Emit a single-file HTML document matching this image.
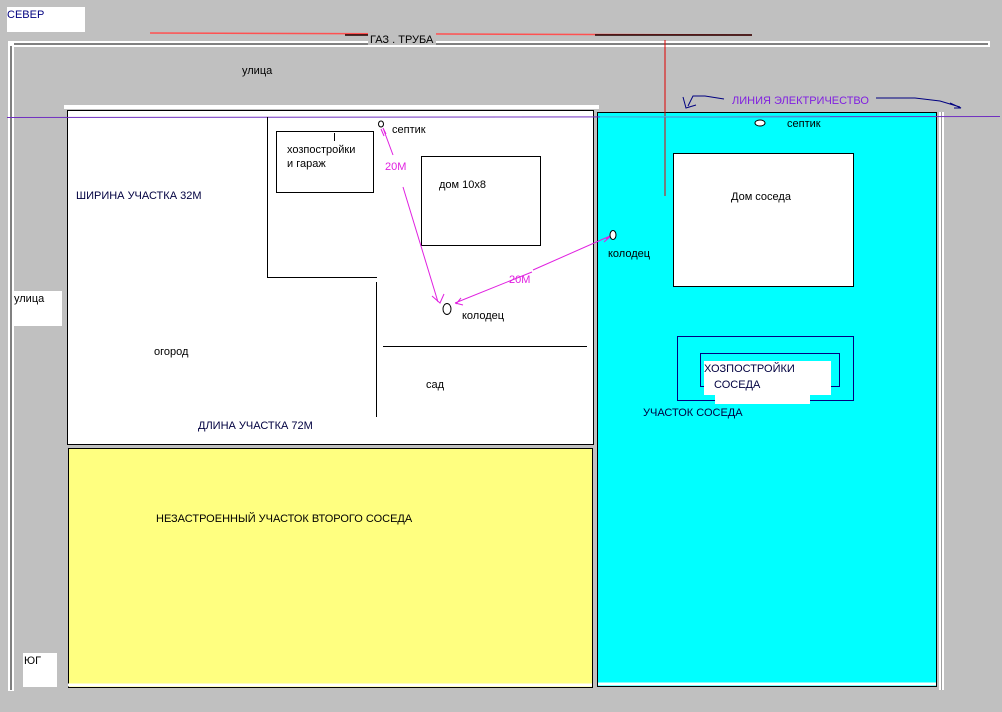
<!DOCTYPE html>
<html><head><meta charset="utf-8"><style>
html,body{margin:0;padding:0;background:#c0c0c0;}
svg{display:block}
text{font-family:"Liberation Sans",sans-serif;font-size:11px;}
</style></head><body>
<svg width="1002" height="712" viewBox="0 0 1002 712" xmlns="http://www.w3.org/2000/svg">
<rect width="1002" height="712" fill="#c0c0c0"/>
<rect x="7" y="7" width="78" height="25" fill="#fff"/>
<text x="7" y="18" fill="#000080">СЕВЕР</text>
<line x1="150" y1="33" x2="752" y2="35" stroke="#ff5050" stroke-width="1.5"/>
<line x1="595" y1="35" x2="752" y2="35" stroke="#200000" stroke-width="1.5"/>
<line x1="345" y1="35" x2="370" y2="35" stroke="#200000" stroke-width="1.5"/>
<rect x="8" y="41" width="982" height="6" fill="#fff"/>
<line x1="10" y1="44" x2="988" y2="44" stroke="#000" stroke-width="1"/>
<rect x="368" y="33" width="68" height="12" fill="#c0c0c0"/>
<text x="370" y="43" fill="#000">ГАЗ . ТРУБА</text>
<rect x="8" y="43" width="6" height="648" fill="#fff"/>
<line x1="11" y1="46" x2="11" y2="690" stroke="#000" stroke-width="1"/>
<text x="242" y="74" fill="#000">улица</text>
<rect x="64" y="105" width="535" height="4" fill="#fff"/>
<rect x="67.5" y="110.5" width="526" height="334" fill="#fff" stroke="#000"/>
<rect x="68.5" y="448.5" width="524" height="239" fill="#ffff80" stroke="#000"/>
<line x1="68" y1="685" x2="592" y2="685" stroke="#fff" stroke-width="3"/>
<rect x="597.5" y="112.5" width="339" height="574" fill="#00ffff" stroke="#000"/>
<line x1="598" y1="684" x2="936" y2="684" stroke="#fff" stroke-width="3"/>
<rect x="939" y="112" width="5" height="578" fill="#fff"/>
<line x1="941.5" y1="112" x2="941.5" y2="690" stroke="#a0a0a0"/>
<line x1="665" y1="40" x2="665" y2="196" stroke="#e00000" stroke-width="1"/>
<line x1="7" y1="117.5" x2="1000" y2="116.5" stroke="#7030c0" stroke-width="1"/>
<line x1="600" y1="117" x2="830" y2="116" stroke="#40c0e0" stroke-width="1"/>
<text x="732" y="104" fill="#8020e0">ЛИНИЯ ЭЛЕКТРИЧЕСТВО</text>
<path d="M724 99 L705 96 L693 96 L688 106 M683 97 L686 108 L696 105" stroke="#000080" fill="none"/>
<path d="M876 98 L915 98 L940 101 L960 107 M950 103 L961 108 L954 108" stroke="#000080" fill="none"/>
<rect x="12" y="291" width="50" height="35" fill="#fff"/>
<text x="14" y="302" fill="#000">улица</text>
<rect x="23" y="653" width="34" height="34" fill="#fff"/>
<text x="24" y="664" fill="#000">ЮГ</text>
<line x1="267.5" y1="117" x2="267.5" y2="277" stroke="#000"/>
<line x1="267" y1="277.5" x2="377" y2="277.5" stroke="#000"/>
<line x1="376.5" y1="282" x2="376.5" y2="417" stroke="#000"/>
<line x1="383" y1="346.5" x2="587" y2="346.5" stroke="#000"/>
<rect x="276.5" y="131.5" width="97" height="61" fill="none" stroke="#000"/>
<line x1="334.5" y1="133" x2="334.5" y2="141" stroke="#000"/>
<rect x="421.5" y="156.5" width="119" height="89" fill="none" stroke="#000"/>
<text x="287" y="153" fill="#000">хозпостройки</text>
<text x="287" y="167" fill="#000">и гараж</text>
<text x="439" y="188" fill="#000">дом 10х8</text>
<ellipse cx="381" cy="124" rx="2.5" ry="3" fill="none" stroke="#000"/>
<text x="392" y="133" fill="#000">септик</text>
<ellipse cx="447" cy="309" rx="4" ry="5.5" fill="none" stroke="#000"/>
<text x="462" y="319" fill="#000">колодец</text>
<text x="154" y="355" fill="#000">огород</text>
<text x="426" y="388" fill="#000">сад</text>
<text x="76" y="199" fill="#000040">ШИРИНА УЧАСТКА 32М</text>
<text x="198" y="429" fill="#000040">ДЛИНА УЧАСТКА 72М</text>
<text x="156" y="522" fill="#000">НЕЗАСТРОЕННЫЙ УЧАСТОК ВТОРОГО СОСЕДА</text>
<g stroke="#e020e0" fill="none">
<path d="M393 155 L383 128 M381 129 L384 136 M383 128 L386 134"/>
<path d="M403 187 L438 302 M432 296 L440 303 L444 294"/>
<path d="M532 272 L455 303 M456 304 L461 298 M455 303 L463 305"/>
<path d="M533 270 L610 236 M604 242 L611 236 L606 239"/>
</g>
<text x="385" y="170" fill="#e020e0">20М</text>
<text x="509" y="283" fill="#e020e0">20М</text>
<ellipse cx="613" cy="235" rx="3" ry="4.5" fill="#fff" stroke="#000"/>
<text x="608" y="257" fill="#000">колодец</text>
<ellipse cx="760" cy="123" rx="5" ry="3" fill="#fff" stroke="#000"/>
<text x="787" y="127" fill="#000">септик</text>
<rect x="673.5" y="153.5" width="180" height="133" fill="#fff" stroke="#000"/>
<text x="731" y="200" fill="#000">Дом соседа</text>
<rect x="677.5" y="336.5" width="176" height="64" fill="none" stroke="#000080"/>
<rect x="700.5" y="353.5" width="139" height="33" fill="none" stroke="#000080"/>
<rect x="704" y="361" width="127" height="34" fill="#fff"/>
<rect x="715" y="394" width="95" height="10" fill="#fff"/>
<text x="704" y="372" fill="#000040">ХОЗПОСТРОЙКИ</text>
<text x="714" y="388" fill="#000040">СОСЕДА</text>
<text x="643" y="416" fill="#000040">УЧАСТОК СОСЕДА</text>
</svg>
</body></html>
